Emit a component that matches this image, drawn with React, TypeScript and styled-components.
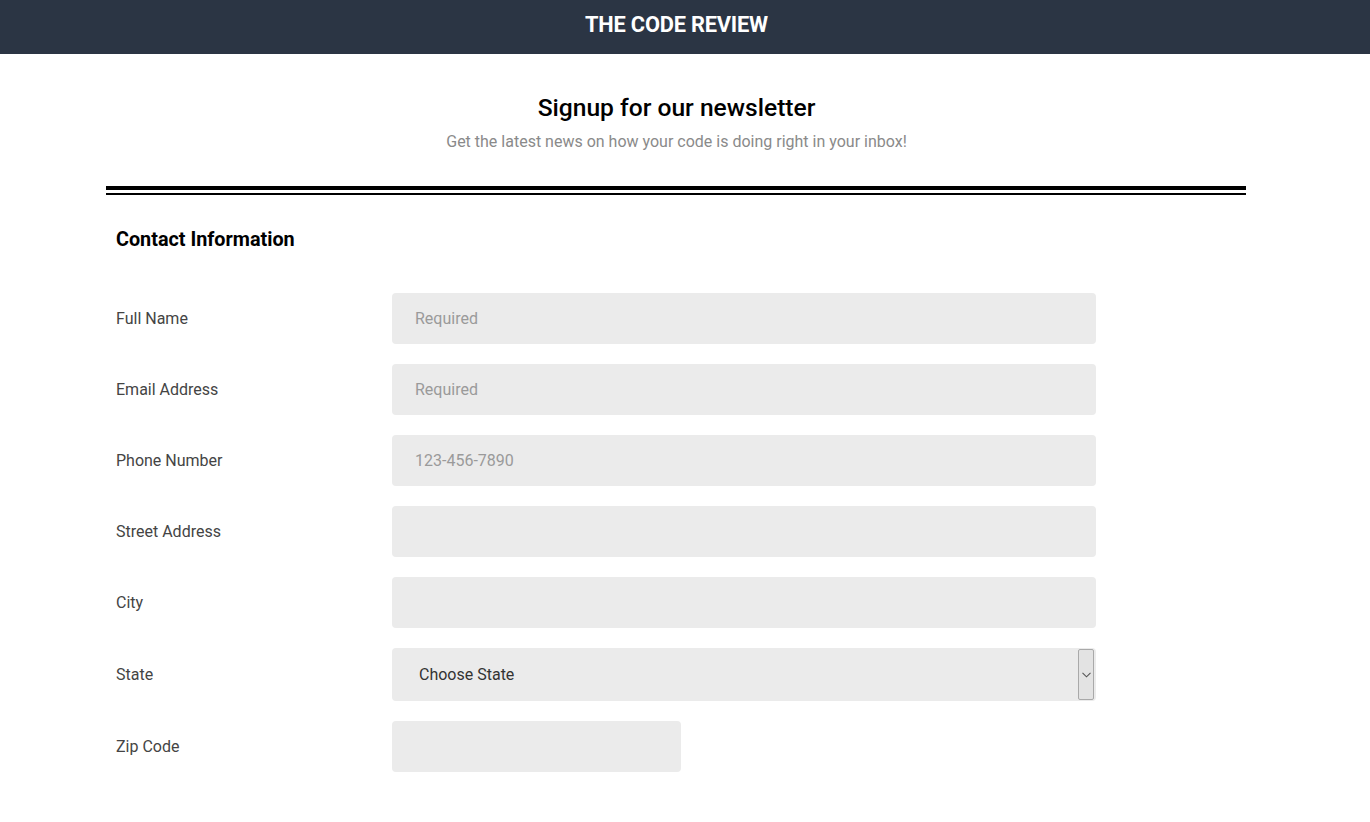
import React from "react";
import styled, { createGlobalStyle } from "styled-components";

const Global = createGlobalStyle`
  html, body { margin: 0; padding: 0; background: #fff; }
  body { font-family: Roboto, "Liberation Sans", Arial, sans-serif; }
  * { box-sizing: border-box; }
`;

const Header = styled.header`
  height: 54px;
  background: #2b3544;
  display: flex;
  align-items: center;
  justify-content: center;
  padding-right: 17px;
`;

const Brand = styled.h1`
  margin: 0;
  color: #fff;
  font-size: 21.8px;
  font-weight: 700;
  letter-spacing: -0.2px;
  padding-bottom: 6px;
`;

const Page = styled.div`
  padding-right: 18px;
`;

const Main = styled.main`
  width: 1140px;
  margin: 0 auto;
`;

const Intro = styled.section`
  display: flex;
  flex-direction: column;
  align-items: center;
  padding-top: 39px;
  padding-bottom: 33px;
  padding-left: 1px;
`;

const Title = styled.h2`
  margin: 0;
  font-size: 24.6px;
  font-weight: 500;
  color: #000;
  line-height: 30px;
`;

const Subtitle = styled.p`
  margin: 8px 0 0;
  font-size: 16px;
  color: #8a8a8a;
  line-height: 22px;
`;

const Divider = styled.div`
  height: 9px;
  border-top: 4px solid #000;
  border-bottom: 2px solid #000;
`;

const Form = styled.form`
  padding: 33px 10px 40px;
`;

const SectionTitle = styled.h3`
  margin: 0 0 41px;
  font-size: 19.8px;
  font-weight: 700;
  color: #000;
  line-height: 24px;
`;

const Fields = styled.div`
  display: flex;
  flex-direction: column;
  gap: 20px;
`;

const Row = styled.div`
  display: flex;
  align-items: center;
`;

const Label = styled.label`
  width: 276px;
  font-size: 16px;
  color: #444;
`;

const Input = styled.input<{ $w?: number }>`
  width: ${(p) => p.$w ?? 704}px;
  height: 51px;
  border: none;
  border-radius: 4px;
  background: #ebebeb;
  padding: 0 23px;
  font-family: Roboto, "Liberation Sans", Arial, sans-serif;
  font-size: 16px;
  color: #333;
  outline: none;
  &::placeholder { color: #9a9a9a; }
`;

const SelectBox = styled.div`
  position: relative;
  width: 704px;
  height: 53px;
  border-radius: 4px;
  background: #ebebeb;
  display: flex;
  align-items: center;
`;

const Select = styled.select`
  appearance: none;
  width: 100%;
  height: 100%;
  border: none;
  background: transparent;
  padding: 0 27px;
  font-family: Roboto, "Liberation Sans", Arial, sans-serif;
  font-size: 16px;
  color: #333;
  outline: none;
`;

const Arrow = styled.span`
  position: absolute;
  right: 2px;
  top: 1px;
  bottom: 1px;
  width: 16px;
  border: 1px solid #a9a9a9;
  border-radius: 2px;
  background: #e3e3e3;
  display: flex;
  align-items: center;
  justify-content: center;
  pointer-events: none;
`;

const fields: { label: string; placeholder?: string }[] = [
  { label: "Full Name", placeholder: "Required" },
  { label: "Email Address", placeholder: "Required" },
  { label: "Phone Number", placeholder: "123-456-7890" },
  { label: "Street Address" },
  { label: "City" },
];

export default function App() {
  return (
    <>
      <Global />
      <Header>
        <Brand>THE CODE REVIEW</Brand>
      </Header>
      <Page>
        <Main>
          <Intro>
            <Title>Signup for our newsletter</Title>
            <Subtitle>Get the latest news on how your code is doing right in your inbox!</Subtitle>
          </Intro>
          <Divider />
          <Form>
            <SectionTitle>Contact Information</SectionTitle>
            <Fields>
              {fields.map((f) => (
                <Row key={f.label}>
                  <Label>{f.label}</Label>
                  <Input placeholder={f.placeholder} />
                </Row>
              ))}
              <Row>
                <Label>State</Label>
                <SelectBox>
                  <Select defaultValue="">
                    <option value="">Choose State</option>
                  </Select>
                  <Arrow>
                    <svg width="9" height="6" viewBox="0 0 9 6">
                      <path d="M0.5 0.8 L4.5 4.8 L8.5 0.8" fill="none" stroke="#555" strokeWidth="1.1" />
                    </svg>
                  </Arrow>
                </SelectBox>
              </Row>
              <Row>
                <Label>Zip Code</Label>
                <Input $w={289} />
              </Row>
            </Fields>
          </Form>
        </Main>
      </Page>
    </>
  );
}
